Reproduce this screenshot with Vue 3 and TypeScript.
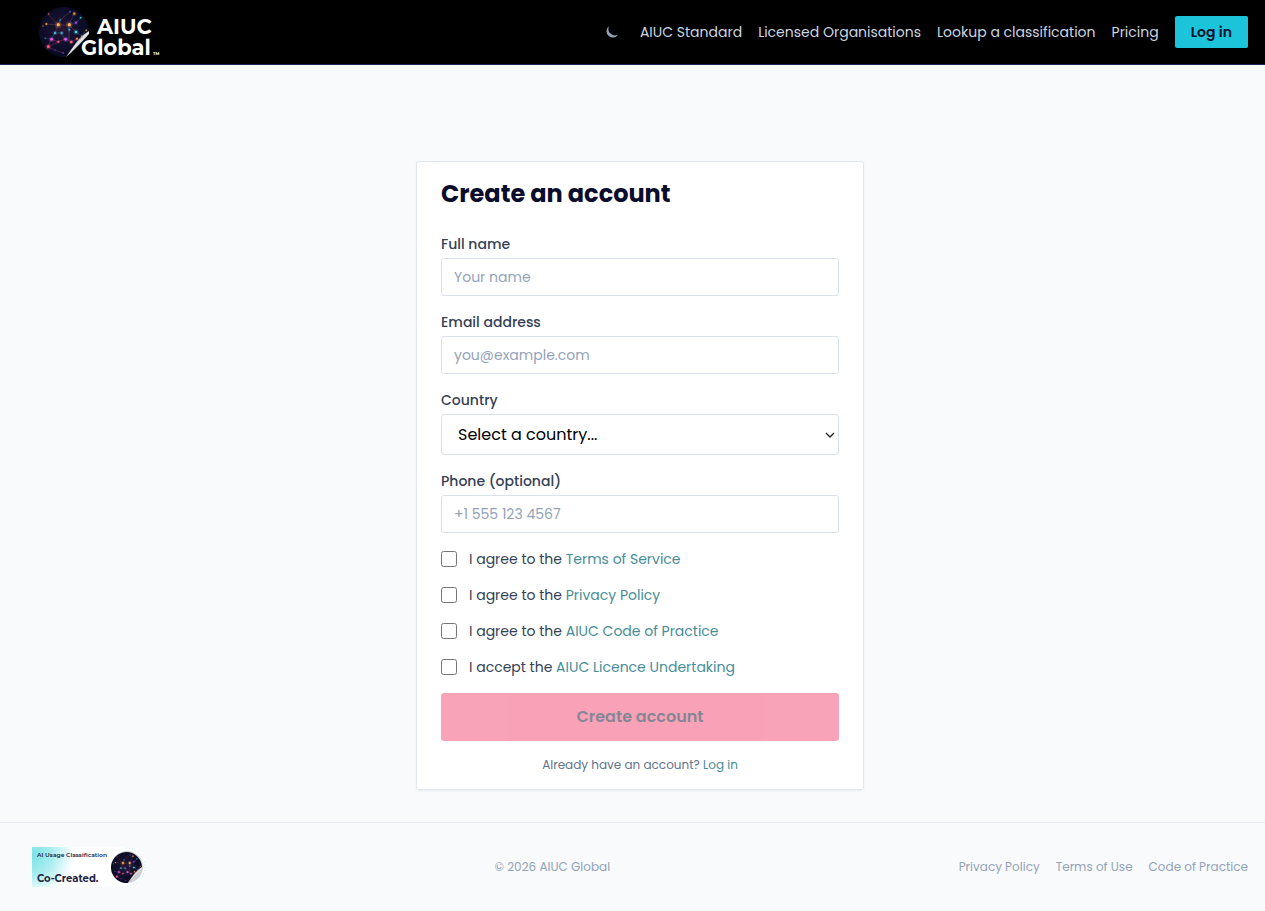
<script setup lang="ts">
import { computed, reactive } from 'vue'

interface Agreement {
  id: string
  lead: string
  link: string
}

interface Node {
  x: number
  y: number
  r: number
  color: string
}

const navLinks: string[] = ['AIUC Standard', 'Licensed Organisations', 'Lookup a classification', 'Pricing']
const footerLinks: string[] = ['Privacy Policy', 'Terms of Use', 'Code of Practice']

const agreements: Agreement[] = [
  { id: 'terms', lead: 'I agree to the', link: 'Terms of Service' },
  { id: 'privacy', lead: 'I agree to the', link: 'Privacy Policy' },
  { id: 'code', lead: 'I agree to the', link: 'AIUC Code of Practice' },
  { id: 'licence', lead: 'I accept the', link: 'AIUC Licence Undertaking' },
]

const countries: string[] = ['Australia', 'Canada', 'Ireland', 'New Zealand', 'United Kingdom', 'United States']

const form = reactive({
  name: '',
  email: '',
  country: '',
  phone: '',
  accepted: {} as Record<string, boolean>,
})

const ready = computed<boolean>(
  () => form.name !== '' && form.email !== '' && form.country !== '' && agreements.every((a) => form.accepted[a.id]),
)

const nodes: Node[] = [
  { x: 19.3, y: 17.7, r: 1.6, color: '#ffb050' },
  { x: 30.3, y: 17.7, r: 1.6, color: '#ffb45c' },
  { x: 16, y: 26, r: 1.1, color: '#4fc8e0' },
  { x: 22.7, y: 26, r: 1.1, color: '#3fb5d8' },
  { x: 30.3, y: 22.7, r: 0.9, color: '#48a9e0' },
  { x: 37, y: 25, r: 1.3, color: '#54d6f0' },
  { x: 12.7, y: 32.3, r: 1.4, color: '#f25be0' },
  { x: 26.7, y: 32.3, r: 1.4, color: '#e85bf0' },
  { x: 19.3, y: 34.7, r: 1, color: '#ff5b78' },
  { x: 32.3, y: 35, r: 1.2, color: '#ff6a7b' },
  { x: 38, y: 31.7, r: 1, color: '#ff8a4a' },
  { x: 9.3, y: 39.7, r: 1.4, color: '#ff5f86' },
  { x: 35.3, y: 6.7, r: 1.1, color: '#f29a3c' },
  { x: 9.7, y: 7, r: 0.7, color: '#c65a5a' },
  { x: 7.3, y: 17, r: 0.9, color: '#e8953c' },
  { x: 37, y: 15.7, r: 1.1, color: '#9a4be0' },
  { x: 41.7, y: 10.7, r: 0.8, color: '#35c6c0' },
  { x: 31, y: 4.7, r: 0.7, color: '#3a6ae0' },
  { x: 4, y: 19, r: 0.6, color: '#c8902c' },
  { x: 47.3, y: 23.3, r: 0.7, color: '#c8a03c' },
  { x: 42.7, y: 29.3, r: 0.6, color: '#d8a04a' },
  { x: 6.3, y: 31.3, r: 0.6, color: '#2c906a' },
  { x: 21.3, y: 13, r: 0.8, color: '#2f90c8' },
  { x: 24, y: 46, r: 0.7, color: '#6a4ac0' },
  { x: 16, y: 43, r: 0.6, color: '#3a4ab0' },
]
</script>

<template>
  <div class="page">
    <svg class="defs" width="0" height="0" aria-hidden="true">
      <defs>
        <radialGradient id="orb-fill" cx="48%" cy="45%" r="55%">
          <stop offset="0" stop-color="#2c1634" />
          <stop offset="0.5" stop-color="#12102e" />
          <stop offset="1" stop-color="#080a20" />
        </radialGradient>
        <linearGradient id="orb-fold" gradientUnits="userSpaceOnUse" x1="36" y1="34" x2="41" y2="39">
          <stop offset="0" stop-color="#66666f" />
          <stop offset="0.5" stop-color="#ededed" />
          <stop offset="1" stop-color="#9a9aa2" />
        </linearGradient>
        <symbol id="orb" viewBox="0 0 50 50">
          <path d="M50 25 A25 25 0 1 0 27 50 L34 42 Q42 32 50 25 Z" fill="url(#orb-fill)" />
          <g fill="none" stroke-width="0.5" opacity="0.6">
            <path d="M19 18 H30 L37 25 M19 18 L9 7 M19 18 L16 26 M7 17 L19 18 L21 13 L31 5" stroke="#b5613f" />
            <path d="M16 26 H22 M12 32 L16 26 M22 26 L26 32 M30 18 V34 M37 16 L42 11 M37 25 L43 29 L47 23" stroke="#3fa0c8" />
            <path d="M30 18 L35 7 M6 31 L12 32 M30 18 L37 16" stroke="#5a58d0" />
            <path d="M9 40 L12 32 L19 35 L26 32 L32 35 L38 32 M9 40 L19 35 M9 40 L16 43 L24 46" stroke="#d04a80" />
          </g>
          <g v-for="(n, i) in nodes" :key="i" :fill="n.color">
            <circle :cx="n.x" :cy="n.y" :r="n.r * 2" opacity="0.22" />
            <circle :cx="n.x" :cy="n.y" :r="n.r" />
          </g>
          <path d="M50 24 Q44 27 39 33 L27 50 Q32 46 37 41 Q44 34 50 27 Z" fill="url(#orb-fold)" />
        </symbol>
      </defs>
    </svg>

    <header class="header">
      <a class="brand" href="#" aria-label="AIUC Global home">
        <svg width="128" height="64" viewBox="0 0 128 64">
          <use href="#orb" x="7" y="7" width="50" height="50" />
          <g class="brand-text" fill="#fff">
            <text x="65" y="34" font-size="21">AIUC</text>
            <text x="49" y="55" font-size="21">Global</text>
            <text x="121" y="55" font-size="4">TM</text>
          </g>
        </svg>
      </a>
      <nav class="nav" aria-label="Main">
        <button class="theme" type="button" aria-label="Toggle dark mode">
          <svg width="14" height="14" viewBox="0 0 14 14" aria-hidden="true">
            <path d="M4.2 1 A6.3 6.3 0 1 0 13.2 9.4 A6.4 6.4 0 0 1 4.2 1 Z" fill="#94a3b8" />
          </svg>
        </button>
        <a v-for="item in navLinks" :key="item" class="nav-link" href="#">{{ item }}</a>
        <a class="login" href="#">Log in</a>
      </nav>
    </header>

    <main class="main">
      <form class="card" @submit.prevent>
        <h1>Create an account</h1>
        <div class="field">
          <label for="name">Full name</label>
          <input id="name" v-model="form.name" type="text" placeholder="Your name" />
        </div>
        <div class="field">
          <label for="email">Email address</label>
          <input id="email" v-model="form.email" type="email" placeholder="you@example.com" />
        </div>
        <div class="field">
          <label for="country">Country</label>
          <div class="select">
            <select id="country" v-model="form.country">
              <option value="">Select a country...</option>
              <option v-for="c in countries" :key="c" :value="c">{{ c }}</option>
            </select>
            <svg class="chevron" width="10" height="6" viewBox="0 0 10 6" aria-hidden="true">
              <path d="M1 1 L5 5 L9 1" fill="none" stroke="#222" stroke-width="1.3" />
            </svg>
          </div>
        </div>
        <div class="field">
          <label for="phone">Phone (optional)</label>
          <input id="phone" v-model="form.phone" type="tel" placeholder="+1 555 123 4567" />
        </div>
        <div v-for="a in agreements" :key="a.id" class="check">
          <input :id="a.id" v-model="form.accepted[a.id]" type="checkbox" />
          <label :for="a.id">{{ a.lead }} <a href="#">{{ a.link }}</a></label>
        </div>
        <button class="submit" type="submit" :disabled="!ready">Create account</button>
        <p class="have">Already have an account? <a href="#">Log in</a></p>
      </form>
    </main>

    <footer class="footer">
      <a class="badge" href="#" aria-label="AI Usage Classification: Co-Created">
        <svg width="114" height="40" viewBox="0 0 114 40">
          <defs>
            <radialGradient id="badge-fill" gradientUnits="userSpaceOnUse" cx="0" cy="8" r="42">
              <stop offset="0" stop-color="#79e3e6" />
              <stop offset="0.45" stop-color="#a5ecef" />
              <stop offset="1" stop-color="#fff" />
            </radialGradient>
          </defs>
          <path d="M0 0 H94 A20 20 0 0 1 94 40 H0 Z" fill="url(#badge-fill)" />
          <path d="M94 1 A19 19 0 0 1 94 39" fill="none" stroke="#a5ebee" stroke-width="1" stroke-dasharray="1 2" />
          <circle cx="95" cy="20" r="16" fill="#d0d0d5" />
          <use href="#orb" x="79" y="5" width="31" height="31" />
          <g class="brand-text" fill="#24243e">
            <text class="badge-title" x="5" y="10" font-size="6">AI Usage Classification</text>
            <text x="5" y="35" font-size="10">Co-Created.</text>
          </g>
        </svg>
      </a>
      <span>© 2026 AIUC Global</span>
      <nav class="footer-nav" aria-label="Legal">
        <a v-for="item in footerLinks" :key="item" href="#">{{ item }}</a>
      </nav>
    </footer>
  </div>
</template>

<style>
html,
body {
  margin: 0;
  background: #f8fafc;
}
</style>

<style scoped>
.page {
  min-height: 100vh;
  display: flex;
  flex-direction: column;
  font-family: Poppins, Inter, sans-serif;
  font-size: 14px;
  line-height: 20px;
  color: #334155;
}
.page *,
.page *::before {
  box-sizing: border-box;
}
.defs {
  position: absolute;
}
a {
  color: inherit;
  text-decoration: none;
}
.header {
  display: flex;
  align-items: center;
  justify-content: space-between;
  height: 65px;
  padding: 0 17px 0 32px;
  background: #000;
  border-bottom: 1px solid #1e2352;
}
.brand,
.badge,
.brand svg,
.badge svg {
  display: block;
}
.brand-text {
  font-family: Montserrat, Inter, sans-serif;
  font-weight: 700;
}
.badge-title {
  font-weight: 600;
}
.nav {
  display: flex;
  align-items: center;
  gap: 16px;
  color: #cbd5e1;
}
.theme {
  display: flex;
  padding: 0 5px;
  border: 0;
  background: none;
}
.login {
  padding: 6px 16px;
  border-radius: 2px;
  background: #1bc4d9;
  color: #0b0f2e;
  font-weight: 600;
}
.main {
  flex: 1;
  display: flex;
  justify-content: center;
  align-items: flex-start;
  padding: 96px 0 32px 15px;
}
.card {
  width: 100%;
  max-width: 448px;
  display: flex;
  flex-direction: column;
  gap: 16px;
  padding: 16px 24px;
  border: 1px solid #e2e8f0;
  border-radius: 3px;
  background: #fff;
  box-shadow: 0 1px 2px rgba(15, 23, 42, 0.06);
}
h1 {
  margin: 0 0 8px;
  font-size: 24px;
  line-height: 32px;
  font-weight: 700;
  color: #0a0d2c;
}
.field {
  display: flex;
  flex-direction: column;
  gap: 4px;
}
.field label {
  font-weight: 500;
}
.field input,
.field select {
  width: 100%;
  height: 38px;
  padding: 0 12px;
  border: 1px solid #d9e1ea;
  border-radius: 3px;
  background: #fff;
  font: inherit;
  color: #0f172a;
}
.field input::placeholder {
  color: #94a3b8;
  opacity: 1;
}
.select {
  display: grid;
  align-items: center;
}
.field select,
.chevron {
  grid-area: 1 / 1;
}
.chevron {
  justify-self: end;
  margin-right: 4px;
  pointer-events: none;
}
.field select {
  height: 41px;
  padding: 0 16px;
  appearance: none;
  font-size: 16px;
  color: #000;
}
.check {
  display: flex;
  align-items: center;
  gap: 12px;
}
.check input {
  width: 16px;
  height: 16px;
  margin: 0;
}
.check a,
.have a {
  color: #468e97;
}
.submit {
  height: 48px;
  border: 0;
  border-radius: 3px;
  background: #f44771;
  color: #0b0f2e;
  font: inherit;
  font-size: 16px;
  font-weight: 600;
}
.submit:disabled {
  opacity: 0.5;
}
.have {
  margin: 0;
  text-align: center;
  font-size: 12px;
  line-height: 16px;
  color: #64748b;
}
.footer {
  display: flex;
  align-items: center;
  justify-content: space-between;
  padding: 24px 17px 24px 32px;
  border-top: 1px solid #e6eaf1;
  font-size: 12px;
  color: #94a3b8;
}
.footer-nav {
  display: flex;
  gap: 16px;
}
</style>
